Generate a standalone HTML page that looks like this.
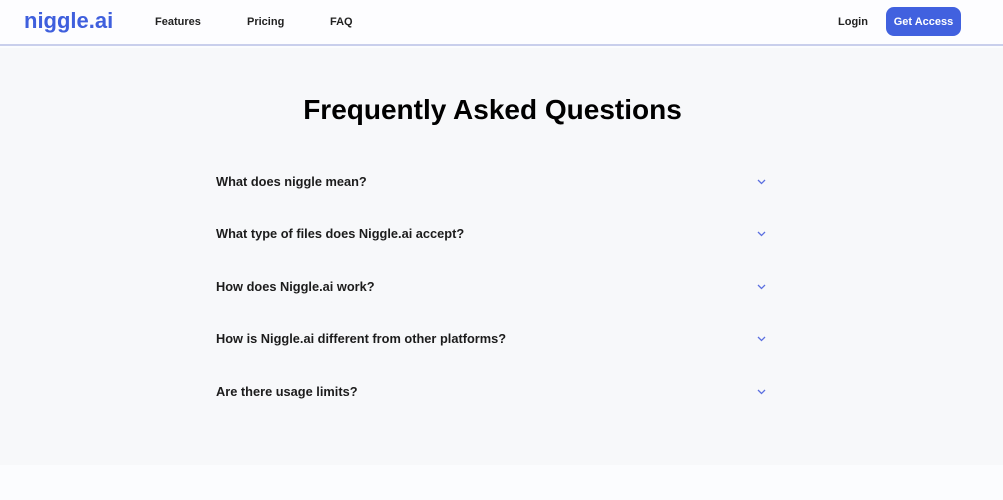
<!DOCTYPE html>
<html><head><meta charset="utf-8"><style>
*{margin:0;padding:0;box-sizing:border-box}
body{width:1003px;height:500px;overflow:hidden;background:#fbfcfe;font-family:"Liberation Sans",Arial,sans-serif;position:relative}
.hdr{position:absolute;left:0;top:0;width:1003px;height:46px;background:#fdfdff;border-bottom:2px solid #c9cfec}
.logo{position:absolute;left:24px;top:8px;font-size:22px;font-weight:bold;color:#3f5fdd;letter-spacing:0}
.nav{position:absolute;top:16px;font-size:11px;font-weight:bold;color:#222}
.btn{position:absolute;left:886px;top:7px;width:75px;height:29px;background:#4161df;border-radius:8px;color:#fff;font-size:11px;font-weight:bold;text-align:center;line-height:30px}
.main{position:absolute;left:0;top:48px;width:1003px;height:417px;background:#f7f8fa}
h1{position:absolute;left:-9px;width:1003px;top:94px;text-align:center;font-size:28px;font-weight:bold;color:#000}
.q{position:absolute;left:216px;font-size:12.8px;font-weight:bold;color:#1c1c1c}
.ch{position:absolute;left:757px}
</style></head><body>
<div class="hdr">
<div class="logo">niggle.ai</div>
<div class="nav" style="left:155px">Features</div>
<div class="nav" style="left:247px">Pricing</div>
<div class="nav" style="left:330px">FAQ</div>
<div class="nav" style="left:838px">Login</div>
<div class="btn">Get Access</div>
</div>
<div class="main"></div>
<h1>Frequently Asked Questions</h1>
<div class="q" style="top:174px">What does niggle mean?</div>
<div class="q" style="top:226px">What type of files does Niggle.ai accept?</div>
<div class="q" style="top:279px">How does Niggle.ai work?</div>
<div class="q" style="top:331px">How is Niggle.ai different from other platforms?</div>
<div class="q" style="top:384px">Are there usage limits?</div>
<svg class="ch" style="top:179px" width="9" height="6"><path d="M1 1L4.5 4.5L8 1" stroke="#5b6fe0" stroke-width="1.3" fill="none"/></svg>
<svg class="ch" style="top:231px" width="9" height="6"><path d="M1 1L4.5 4.5L8 1" stroke="#5b6fe0" stroke-width="1.3" fill="none"/></svg>
<svg class="ch" style="top:284px" width="9" height="6"><path d="M1 1L4.5 4.5L8 1" stroke="#5b6fe0" stroke-width="1.3" fill="none"/></svg>
<svg class="ch" style="top:336px" width="9" height="6"><path d="M1 1L4.5 4.5L8 1" stroke="#5b6fe0" stroke-width="1.3" fill="none"/></svg>
<svg class="ch" style="top:389px" width="9" height="6"><path d="M1 1L4.5 4.5L8 1" stroke="#5b6fe0" stroke-width="1.3" fill="none"/></svg>
</body></html>
